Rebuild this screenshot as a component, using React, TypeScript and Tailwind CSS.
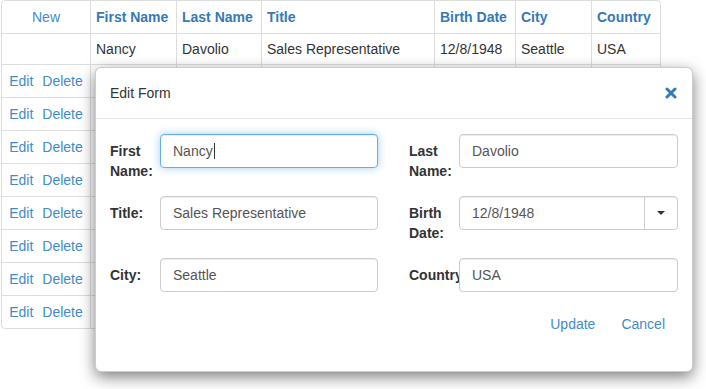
import React from "react";

const cols = [
  "w-[88px]",
  "w-[86px]",
  "w-[85px]",
  "w-[173px]",
  "w-[81px]",
  "w-[76px]",
  "w-[69px]",
];

const headers = ["First Name", "Last Name", "Title", "Birth Date", "City", "Country"];
const dataRow = ["Nancy", "Davolio", "Sales Representative", "12/8/1948", "Seattle", "USA"];

function Row({ children, className }: { children: React.ReactNode; className: string }) {
  return <div className={"flex " + className}>{children}</div>;
}

function Field({
  label,
  value,
  focused,
  dropdown,
}: {
  label: string;
  value: string;
  focused?: boolean;
  dropdown?: boolean;
}) {
  return (
    <div className="flex items-start">
      <label className="w-[50px] shrink-0 pt-[7px] text-[14px] leading-[20px] font-bold text-[#333] whitespace-normal">
        {label}
      </label>
      <div
        className={
          "relative flex-1 h-[34px] flex items-center rounded-[4px] border bg-white text-[14px] text-[#555] " +
          (focused
            ? "border-[#66afe9] shadow-[inset_0_1px_1px_rgba(0,0,0,0.075),0_0_8px_rgba(102,175,233,0.6)]"
            : "border-[#ccc] shadow-[inset_0_1px_1px_rgba(0,0,0,0.075)]")
        }
      >
        <div className="flex-1 px-[12px] flex items-center">
          {value}
          {focused && <span className="inline-block w-px h-[16px] bg-[#333] ml-px" />}
        </div>
        {dropdown && (
          <div className="w-[33px] h-full border-l border-[#ccc] flex items-center justify-center">
            <svg width="8" height="4" viewBox="0 0 8 4">
              <path d="M0 0 L8 0 L4 4 Z" fill="#333" />
            </svg>
          </div>
        )}
      </div>
    </div>
  );
}

export default function App() {
  return (
    <div className="relative w-[706px] h-[389px] bg-white font-['Liberation_Sans',Arial,sans-serif] text-[14px] text-[#333] overflow-hidden">
      <div className="ml-px w-[660px] border border-[#ddd] rounded-[4px]">
        <Row className="h-[32px]">
          <div className={cols[0] + " flex items-center justify-center text-[#428bca]"}>New</div>
          {headers.map((h, i) => (
            <div
              key={h}
              className={cols[i + 1] + " border-l border-[#ddd] flex items-center pl-[5px] font-bold text-[#337ab7] whitespace-nowrap"}
            >
              {h}
            </div>
          ))}
        </Row>
        <Row className="h-[31px] border-t border-[#ddd]">
          <div className={cols[0]} />
          {dataRow.map((d, i) => (
            <div
              key={i}
              className={cols[i + 1] + " border-l border-[#ddd] flex items-center pl-[5px] whitespace-nowrap"}
            >
              {d}
            </div>
          ))}
        </Row>
        {Array.from({ length: 8 }).map((_, r) => (
          <Row key={r} className="h-[33px] border-t border-[#ddd]">
            <div className={cols[0] + " flex items-center justify-center gap-[9px] text-[#428bca]"}>
              <span>Edit</span>
              <span>Delete</span>
            </div>
            {dataRow.map((_, i) => (
              <div key={i} className={cols[i + 1] + " border-l border-[#ddd]"} />
            ))}
          </Row>
        ))}
      </div>

      <div className="absolute left-[95px] top-[67px] w-[598px] bg-white border border-[rgba(0,0,0,0.2)] rounded-[6px] shadow-[0_5px_15px_rgba(0,0,0,0.5)]">
        <div className="h-[51px] border-b border-[#e5e5e5] flex items-center justify-between pl-[14px] pr-[15px]">
          <span className="text-[14px] text-[#333]">Edit Form</span>
          <svg width="12" height="12" viewBox="0 0 12 12">
            <path d="M2 2 L10 10 M10 2 L2 10" stroke="#337ab7" strokeWidth="3" strokeLinecap="round" />
          </svg>
        </div>
        <div className="px-[14px] pt-[15px] pb-[30px]">
          <div className="grid grid-cols-[268px_269px] gap-x-[31px] gap-y-[15px]">
            <Field label="First Name:" value="Nancy" focused />
            <Field label="Last Name:" value="Davolio" />
            <Field label="Title:" value="Sales Representative" />
            <Field label="Birth Date:" value="12/8/1948" dropdown />
            <Field label="City:" value="Seattle" />
            <Field label="Country:" value="USA" />
          </div>
          <div className="mt-[15px] mr-px flex justify-end gap-[2px]">
            <span className="h-[34px] px-[12px] flex items-center text-[#428bca]">Update</span>
            <span className="h-[34px] px-[12px] flex items-center text-[#428bca]">Cancel</span>
          </div>
        </div>
      </div>
    </div>
  );
}
